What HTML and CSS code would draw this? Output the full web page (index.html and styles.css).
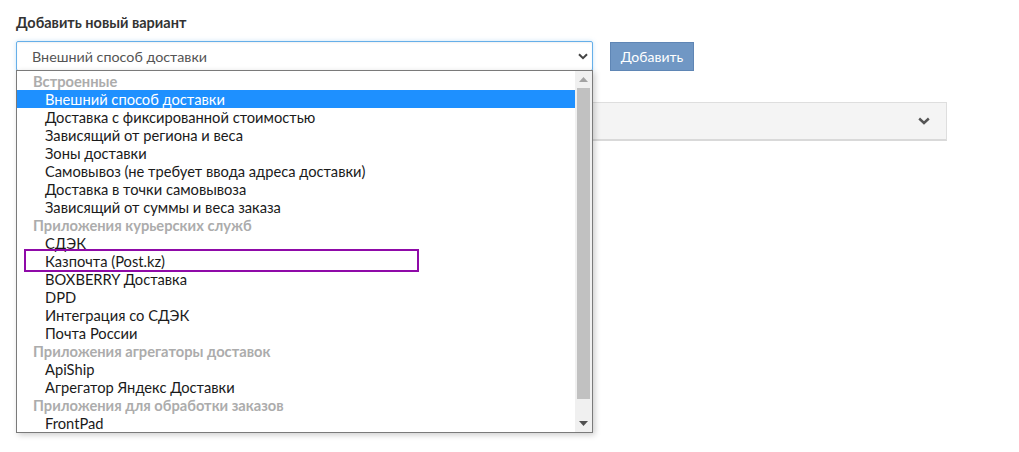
FILE: index.html
```html
<!DOCTYPE html>
<html lang="ru">
<head>
<meta charset="utf-8">
<title>Добавить новый вариант</title>
<link rel="stylesheet" href="styles.css">
</head>
<body>
<div class="page">
  <div class="label">Добавить новый вариант</div>
  <div class="add-row">
    <div class="select">
      <span class="select-text">Внешний способ доставки</span>
      <svg class="select-caret" width="10" height="7" viewBox="0 0 10 7"><path d="M1 1.2 L5 5.2 L9 1.2" fill="none" stroke="#444" stroke-width="2"/></svg>
    </div>
    <button class="btn">Добавить</button>
  </div>
  <div class="panel">
    <svg class="panel-caret" width="12" height="8" viewBox="0 0 12 8"><path d="M1.2 1.5 L6 6 L10.8 1.5" fill="none" stroke="#555" stroke-width="2.4"/></svg>
  </div>

  <div class="dropdown">
    <ul class="options">
      <li class="group">Встроенные</li>
      <li class="opt selected">Внешний способ доставки</li>
      <li class="opt">Доставка с фиксированной стоимостью</li>
      <li class="opt">Зависящий от региона и веса</li>
      <li class="opt">Зоны доставки</li>
      <li class="opt">Самовывоз (не требует ввода адреса доставки)</li>
      <li class="opt">Доставка в точки самовывоза</li>
      <li class="opt">Зависящий от суммы и веса заказа</li>
      <li class="group">Приложения курьерских служб</li>
      <li class="opt">СДЭК</li>
      <li class="opt">Казпочта (Post.kz)</li>
      <li class="opt">BOXBERRY Доставка</li>
      <li class="opt">DPD</li>
      <li class="opt">Интеграция со СДЭК</li>
      <li class="opt">Почта России</li>
      <li class="group">Приложения агрегаторы доставок</li>
      <li class="opt">ApiShip</li>
      <li class="opt">Агрегатор Яндекс Доставки</li>
      <li class="group">Приложения для обработки заказов</li>
      <li class="opt">FrontPad</li>
    </ul>
    <div class="scrollbar">
      <div class="sb-arrow"><svg width="9" height="5" viewBox="0 0 9 5"><path d="M0 5 L4.5 0 L9 5 Z" fill="#a3a3a3"/></svg></div>
      <div class="sb-thumb"></div>
      <div class="sb-space"></div>
      <div class="sb-arrow"><svg width="9" height="5" viewBox="0 0 9 5"><path d="M0 0 L9 0 L4.5 5 Z" fill="#505050"/></svg></div>
    </div>
    <div class="mark"></div>
  </div>
</div>
</body>
</html>
```
FILE: styles.css
```css
* { box-sizing: border-box; }

html, body {
  margin: 0;
  background: #fff;
}

body {
  font-family: Lato, "Open Sans", "Noto Sans", sans-serif;
  color: #222;
}

.page {
  position: relative;
  min-height: 452px;
  padding: 14px 16px 0 16px;
}

.label {
  font-size: 14.5px;
  font-weight: 700;
  color: #333;
  line-height: 18px;
}

.add-row {
  display: flex;
  align-items: flex-start;
  gap: 17px;
  margin-top: 9px;
}

.select {
  width: 577px;
  height: 30px;
  border: 1px solid #66afe9;
  border-radius: 2px;
  display: flex;
  align-items: center;
  justify-content: space-between;
  padding: 0 4px 0 15px;
  box-shadow: inset 0 1px 2px rgba(0,0,0,0.06), 0 0 4px rgba(102,175,233,0.35);
}

.select-text {
  font-size: 14.3px;
  color: #555;
}

.btn {
  height: 29px;
  margin-top: 1px;
  width: 84px;
  padding: 0;
  background: #7097c4;
  border: 1px solid #5f86b5;
  color: #fff;
  font-family: inherit;
  font-size: 14px;
  border-radius: 0;
}

.panel {
  margin-top: 31px;
  width: 931px;
  height: 39px;
  background: #f4f4f4;
  border: 1px solid #dedede;
  border-bottom: 2px solid #d9d9d9;
  display: flex;
  align-items: center;
  justify-content: flex-end;
  padding-right: 16px;
}

.dropdown {
  position: absolute;
  left: 16px;
  top: 70px;
  width: 577px;
  height: 363px;
  border: 1px solid #7a7a7a;
  background: #fff;
  display: flex;
  box-shadow: 2px 2px 6px rgba(0,0,0,0.2);
}

.options {
  list-style: none;
  margin: 0;
  padding: 1px 0 0 0;
  flex: 1;
  font-size: 14.7px;
}

.options li {
  height: 18px;
  line-height: 18px;
  white-space: nowrap;
}

.group {
  padding-left: 16px;
  font-weight: 700;
  color: #acacac;
}

.opt {
  padding-left: 28px;
  color: #1a1a1a;
}

.opt.selected {
  background: #1e90ff;
  color: #fff;
}

.scrollbar {
  width: 17px;
  background: #f0f0f0;
  display: flex;
  flex-direction: column;
}

.sb-arrow {
  height: 17px;
  display: flex;
  align-items: center;
  justify-content: center;
}

.sb-thumb {
  height: 311px;
  margin: 0 2px;
  background: #c1c1c1;
}

.sb-space { flex: 1; }

.mark {
  position: absolute;
  left: 7px;
  top: 178px;
  width: 395px;
  height: 23px;
  border: 2px solid #8f0aa8;
}
```
